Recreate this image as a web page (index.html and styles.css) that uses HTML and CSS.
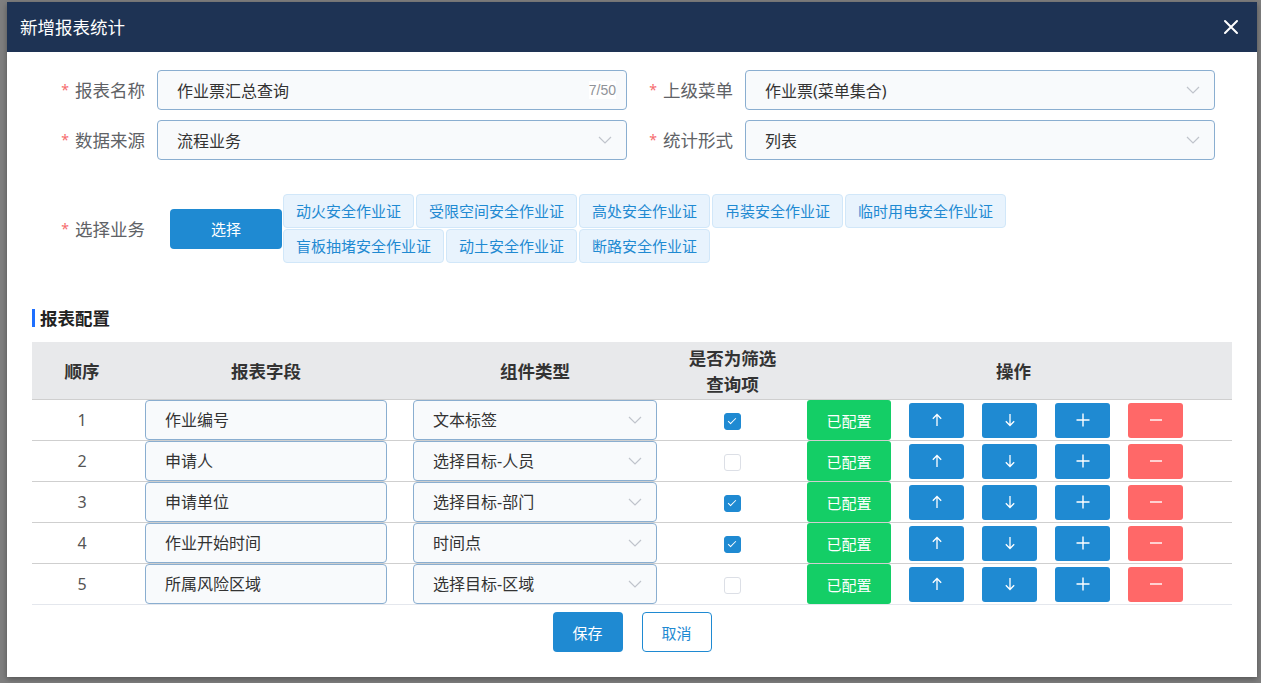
FILE: index.html
```html
<!DOCTYPE html>
<html>
<head>
  <meta charset="utf-8">
  <link rel="stylesheet" href="styles.css">
</head>
<body>
  <div class="dialog">
    <div class="dialog-header">
      <div class="dialog-title">新增报表统计</div>
      <svg class="close-icon" width="16" height="16" viewBox="0 0 16 16"><path d="M2 2L14 14M14 2L2 14" stroke="#fff" stroke-width="2" stroke-linecap="round"/></svg>
    </div>

    <div class="dialog-body">
      <div class="form-row">
        <div class="form-item">
          <label class="form-label"><span class="required">*</span>报表名称</label>
          <div class="input-box">
            <span class="input-text">作业票汇总查询</span>
            <span class="input-count">7/50</span>
          </div>
        </div>
        <div class="form-item">
          <label class="form-label narrow"><span class="required">*</span>上级菜单</label>
          <div class="input-box select">
            <span class="input-text">作业票(菜单集合)</span>
          </div>
        </div>
      </div>

      <div class="form-row">
        <div class="form-item">
          <label class="form-label"><span class="required">*</span>数据来源</label>
          <div class="input-box select">
            <span class="input-text">流程业务</span>
          </div>
        </div>
        <div class="form-item">
          <label class="form-label narrow"><span class="required">*</span>统计形式</label>
          <div class="input-box select">
            <span class="input-text">列表</span>
          </div>
        </div>
      </div>

      <div class="form-row business-row">
        <label class="form-label"><span class="required">*</span>选择业务</label>
        <button class="primary-button pick-button">选择</button>
        <div class="tag-list">
          <span class="tag">动火安全作业证</span>
          <span class="tag">受限空间安全作业证</span>
          <span class="tag">高处安全作业证</span>
          <span class="tag">吊装安全作业证</span>
          <span class="tag">临时用电安全作业证</span>
          <span class="tag">盲板抽堵安全作业证</span>
          <span class="tag">动土安全作业证</span>
          <span class="tag">断路安全作业证</span>
        </div>
      </div>

      <div class="section-title">报表配置</div>

      <table class="config-table">
        <thead>
          <tr>
            <th class="col-order">顺序</th>
            <th class="col-field">报表字段</th>
            <th class="col-type">组件类型</th>
            <th class="col-filter">是否为筛选<br>查询项</th>
            <th class="col-action">操作</th>
          </tr>
        </thead>
        <tbody id="rows"></tbody>
      </table>

      <div class="footer">
        <button class="primary-button footer-button">保存</button>
        <button class="plain-button footer-button">取消</button>
      </div>
    </div>
  </div>

  <script>
    // table rows
    const rows = [
      { field: '作业编号', type: '文本标签', filter: true },
      { field: '申请人', type: '选择目标-人员', filter: false },
      { field: '申请单位', type: '选择目标-部门', filter: true },
      { field: '作业开始时间', type: '时间点', filter: true },
      { field: '所属风险区域', type: '选择目标-区域', filter: false }
    ];

    const upIcon = '<svg width="12" height="14" viewBox="0 0 12 14"><path d="M6 13V1.5M1.8 5.8L6 1.5L10.2 5.8" fill="none" stroke="#fff" stroke-width="1.3"/></svg>';
    const downIcon = '<svg width="12" height="14" viewBox="0 0 12 14"><path d="M6 1V12.5M1.8 8.2L6 12.5L10.2 8.2" fill="none" stroke="#fff" stroke-width="1.3"/></svg>';
    const plusIcon = '<svg width="14" height="14" viewBox="0 0 14 14"><path d="M7 0.5V13.5M0.5 7H13.5" fill="none" stroke="#fff" stroke-width="1.4"/></svg>';
    const minusIcon = '<svg width="14" height="14" viewBox="0 0 14 14"><path d="M1 7H13" fill="none" stroke="#fff" stroke-width="1.4"/></svg>';

    const body = document.getElementById('rows');
    rows.forEach((row, i) => {
      const tr = document.createElement('tr');
      tr.innerHTML = `
        <td class="col-order">${i + 1}</td>
        <td class="col-field"><div class="cell-input">${row.field}</div></td>
        <td class="col-type"><div class="cell-input select">${row.type}</div></td>
        <td class="col-filter"><span class="checkbox${row.filter ? ' checked' : ''}"></span></td>
        <td class="col-action">
          <div class="action-list">
            <button class="success-button">已配置</button>
            <button class="icon-button">${upIcon}</button>
            <button class="icon-button">${downIcon}</button>
            <button class="icon-button">${plusIcon}</button>
            <button class="icon-button danger">${minusIcon}</button>
          </div>
        </td>`;
      body.appendChild(tr);
    });
  </script>
</body>
</html>
```

FILE: styles.css
```css
body {
  font-family: 'Noto Sans', 'Noto Sans CJK SC', sans-serif;
  margin: 0;
  padding: 0;
  background-color: #7f7f7f;
  color: #333333;
  height: 683px;
  overflow: hidden;
}

.dialog {
  width: 1250px;
  height: 675px;
  margin: 2px 0 0 7px;
  background-color: #ffffff;
  box-shadow: 0 2px 6px rgba(0, 0, 0, 0.35);
}

.dialog-header {
  height: 50px;
  background-color: #1e3354;
  display: flex;
  align-items: center;
  justify-content: space-between;
  padding: 0 18px 0 13px;
}

.dialog-title {
  color: #ffffff;
  font-size: 17.5px;
  line-height: 20px;
}

.dialog-body {
  padding: 18px 25px 0 25px;
}

/* form */

.form-row {
  display: flex;
  margin-bottom: 10px;
}

.form-item {
  display: flex;
}

.form-label {
  width: 125px;
  box-sizing: border-box;
  padding-right: 12px;
  text-align: right;
  font-size: 17.5px;
  line-height: 40px;
  color: #606266;
  flex-shrink: 0;
}

.form-label.narrow {
  width: 118px;
}

.required {
  color: #f56c6c;
  font-size: 14px;
  margin-right: 6px;
  vertical-align: 2px;
}

.input-box {
  width: 470px;
  height: 40px;
  box-sizing: border-box;
  border: 1px solid #8aaed0;
  border-radius: 4px;
  background-color: #f8fafc;
  display: flex;
  align-items: center;
  justify-content: space-between;
  padding: 0 10px 0 19px;
}

.input-text {
  font-size: 16px;
  color: #333333;
}

.input-count {
  font-size: 14px;
  color: #909399;
  background-color: #ffffff;
  line-height: 18px;
  font-family: 'Liberation Sans', sans-serif;
}

.select {
  background-image: url("data:image/svg+xml,%3Csvg xmlns='http://www.w3.org/2000/svg' width='14' height='8' viewBox='0 0 14 8'%3E%3Cpolyline points='1 1 7 7 13 1' fill='none' stroke='%23c0c4cc' stroke-width='1.2'/%3E%3C/svg%3E");
  background-repeat: no-repeat;
  background-position: right 14px center;
}

.business-row {
  margin-top: 34px;
  align-items: center;
  margin-bottom: 0;
}

.primary-button {
  background-color: #1f8ad2;
  color: #ffffff;
  border: none;
  border-radius: 4px;
  font-family: inherit;
  font-size: 15px;
  cursor: pointer;
}

.pick-button {
  width: 112px;
  height: 40px;
  margin-left: 13px;
  flex-shrink: 0;
}

.tag-list {
  width: 740px;
  margin-left: 1px;
  display: flex;
  flex-wrap: wrap;
  column-gap: 2px;
  row-gap: 1px;
}

.tag {
  height: 34px;
  box-sizing: border-box;
  line-height: 32px;
  padding: 0 12px;
  font-size: 15px;
  color: #1f8ad2;
  background-color: #e8f3fd;
  border: 1px solid #d1e7f9;
  border-radius: 4px;
}

/* table */

.section-title {
  margin-top: 46px;
  border-left: 3px solid #1e6fff;
  padding-left: 5px;
  font-size: 17.5px;
  line-height: 18px;
  font-weight: 700;
  color: #222222;
}

.config-table {
  width: 1200px;
  margin-top: 15px;
  border-collapse: collapse;
  table-layout: fixed;
}

.config-table th {
  height: 57px;
  background-color: #e8e9eb;
  font-size: 17.5px;
  font-weight: 700;
  line-height: 26px;
  color: #333333;
  border-bottom: 1px solid #cfcfcf;
  padding: 0;
}

.config-table td {
  height: 40px;
  padding: 0;
  border-bottom: 1px solid #cfcfcf;
  text-align: center;
}

.config-table tr:last-child td {
  border-bottom-color: #e4e7ed;
}

.col-order {
  width: 100px;
  font-size: 16px;
  color: #555555;
}

.col-field {
  width: 268px;
}

.col-type {
  width: 270px;
}

.col-filter {
  width: 125px;
}

.col-action {
  width: 437px;
}

.cell-input {
  height: 40px;
  box-sizing: border-box;
  margin: 0 13px;
  border: 1px solid #8aaed0;
  border-radius: 4px;
  background-color: #f8fafc;
  text-align: left;
  padding-left: 19px;
  font-size: 16px;
  line-height: 38px;
  color: #333333;
}

.checkbox {
  display: inline-block;
  width: 17px;
  height: 17px;
  box-sizing: border-box;
  border: 1px solid #dcdfe6;
  border-radius: 3px;
  background-color: #ffffff;
  vertical-align: middle;
  position: relative;
}

.checkbox.checked {
  background-color: #1f8ad2;
  border-color: #1f8ad2;
}

.checkbox.checked::after {
  content: '';
  position: absolute;
  left: 5px;
  top: 2px;
  width: 3px;
  height: 7px;
  border: solid #ffffff;
  border-width: 0 1.5px 1.5px 0;
  transform: rotate(45deg);
}

.action-list {
  display: flex;
  align-items: center;
  padding-left: 12px;
  gap: 18px;
}

.success-button {
  width: 84px;
  height: 40px;
  background-color: #14ce66;
  color: #ffffff;
  border: none;
  border-radius: 3px;
  font-family: inherit;
  font-size: 15px;
}

.icon-button {
  width: 55px;
  height: 35px;
  background-color: #1f8ad2;
  border: none;
  border-radius: 3px;
  display: flex;
  align-items: center;
  justify-content: center;
  padding: 0;
}

.icon-button.danger {
  background-color: #ff6868;
}

/* footer */

.footer {
  display: flex;
  justify-content: center;
  gap: 19px;
  margin-top: 7px;
}

.footer-button {
  width: 70px;
  height: 40px;
}

.plain-button {
  background-color: #ffffff;
  color: #1f8ad2;
  border: 1px solid #1f8ad2;
  border-radius: 4px;
  font-family: inherit;
  font-size: 15px;
}
```
